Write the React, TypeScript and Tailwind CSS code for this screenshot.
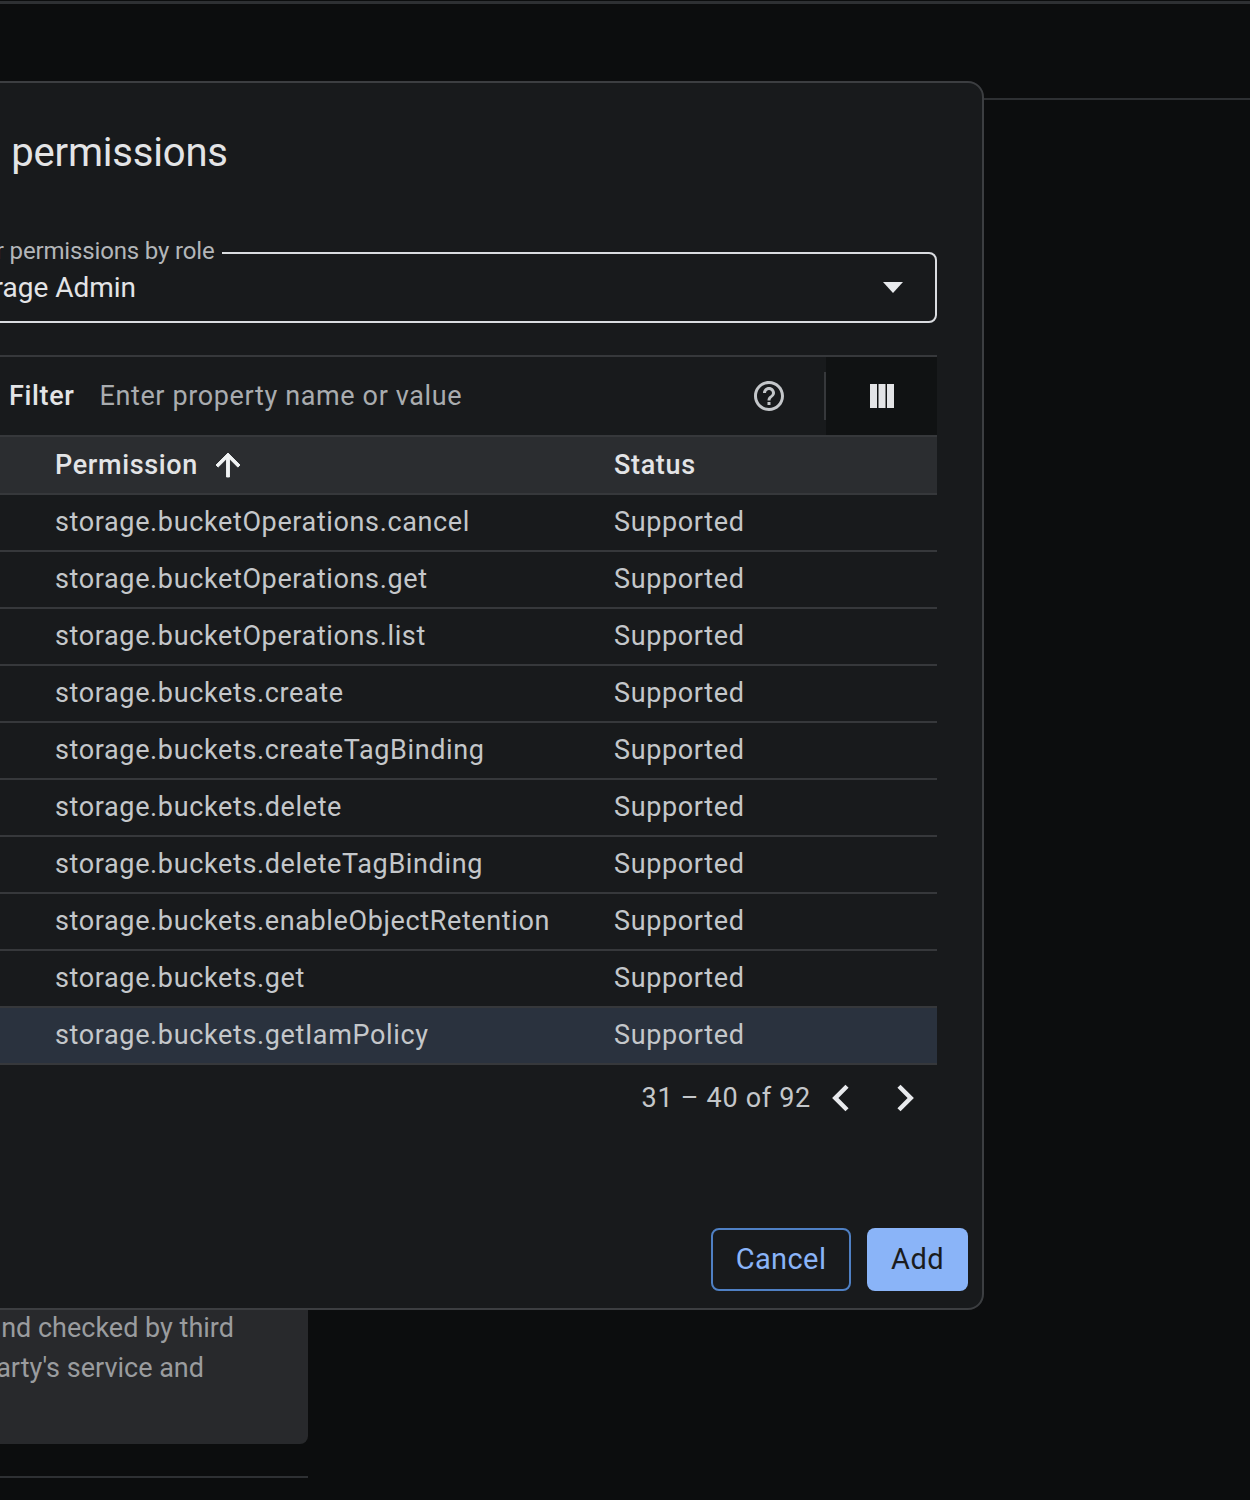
const permissions = [
  "storage.bucketOperations.cancel",
  "storage.bucketOperations.get",
  "storage.bucketOperations.list",
  "storage.buckets.create",
  "storage.buckets.createTagBinding",
  "storage.buckets.delete",
  "storage.buckets.deleteTagBinding",
  "storage.buckets.enableObjectRetention",
  "storage.buckets.get",
  "storage.buckets.getIamPolicy",
]

function Row({ name, selected }: { name: string; selected: boolean }) {
  return (
    <div
      className={`flex h-[57px] items-center border-b-2 border-[#36383b] pt-[1px] text-[27px] tracking-[0.63px] text-[#c4c7ca] ${
        selected ? "bg-[#2a323e]" : ""
      }`}
    >
      <div className="w-[674px] pl-[115px]">{name}</div>
      <div>Supported</div>
    </div>
  )
}

export default function App() {
  return (
    <div className="relative h-[1500px] w-[1250px] overflow-hidden bg-[#0c0d0e] font-['Roboto',sans-serif]">
      {/* page behind the dialog */}
      <div className="mt-[1px] h-[3px] bg-[#2e3033]" />
      <div className="mt-[94px] h-[2px] bg-[#2e3033]" />
      <div className="ml-[-100px] mt-[1200px] w-[408px]">
        <div className="rounded-b-lg bg-[#28292c] pb-[56px] pl-[100px] pt-[8px] text-[27px] leading-[40px] text-[#9a9c9f]">
          <div className="ml-[-60px] h-[80px] w-[340px] whitespace-nowrap">
            <div className="text-right pr-[46px]">and checked by third</div>
            <div className="text-right pr-[76px]">party's service and</div>
          </div>
        </div>
        <div className="mt-[32px] h-[2px] bg-[#2e3033]" />
      </div>

      {/* dialog */}
      <div className="absolute left-[-106px] top-[81px] h-[1229px] w-[1090px] rounded-r-[16px] border-2 border-[#3c3e41] bg-[#181a1c] pl-[44px] pr-[45px]">
        <h1 className="ml-[-9px] mt-[40px] text-[40px] leading-[60px] tracking-[-0.2px] text-[#e3e4e6]">Add permissions</h1>

        <div className="relative mt-[69px] flex h-[71px] items-center justify-between rounded-lg border-2 border-[#dadce0] pl-[10px] pr-[32px] text-[28px] text-[#e3e4e6]">
          <span className="absolute left-[7px] top-[-18px] bg-[#181a1c] px-[2px] pr-[7px] text-[24px] leading-[30px] tracking-[-0.15px] text-[#b3b6b9]">
            Filter permissions by role
          </span>
          <span>Storage Admin</span>
          <svg width="20" height="12" viewBox="0 0 20 12">
            <path d="M0 0h20L10 11z" fill="#e8eaed" />
          </svg>
        </div>

        <div className="mt-[32px] flex h-[82px] border-y-2 border-[#36383b]">
          <div className="flex flex-1 items-center pl-[69px] text-[27px] tracking-[0.63px]">
            <span className="font-medium text-[#e3e4e6]">Filter</span>
            <span className="ml-[25px] text-[#a9acaf]">Enter property name or value</span>
            <svg width="36" height="36" viewBox="0 0 24 24" fill="#c4c7ca" className="ml-auto mr-[37px]">
              <path d="M11 18h2v-2h-2v2zm1-16C6.48 2 2 6.48 2 12s4.48 10 10 10 10-4.48 10-10S17.52 2 12 2zm0 18c-4.41 0-8-3.59-8-8s3.59-8 8-8 8 3.59 8 8-3.59 8-8 8zm0-14c-2.21 0-4 1.79-4 4h2c0-1.1.9-2 2-2s2 .9 2 2c0 2-3 1.75-3 5h2c0-2.25 3-2.5 3-5 0-2.21-1.79-4-4-4z" />
            </svg>
            <div className="h-[48px] w-[2px] bg-[#36383b]" />
          </div>
          <div className="flex w-[111px] items-center justify-center bg-[#101213]">
            <svg width="24" height="24" viewBox="0 0 24 24" fill="#e3e4e6">
              <path d="M0 0h7v24H0zM8.500 0h7v24h-7zM17 0h7v24h-7z" />
            </svg>
          </div>
        </div>

        <div className="flex h-[57.5px] items-center border-b-2 border-[#36383b] bg-[#2b2d30] pt-[1px] text-[27px] font-medium tracking-[0.65px] text-[#e3e4e6]">
          <div className="flex w-[674px] items-center pl-[115px]">
            Permission
            <svg width="36" height="36" viewBox="0 0 24 24" fill="#f1f3f4" stroke="#f1f3f4" strokeWidth="0.6" className="ml-[12px]">
              <path d="M4 12l1.410 1.410L11 7.830V20h2V7.830l5.580 5.590L20 12l-8-8-8 8z" />
            </svg>
          </div>
          <div>Status</div>
        </div>

        {permissions.map((name, i) => (
          <Row key={name} name={name} selected={i === permissions.length - 1} />
        ))}

        <div className="mt-[13.5px] flex items-center justify-end text-[27px] tracking-[0.7px] text-[#c4c7ca]">
          <span>31 – 40 of 92</span>
          <svg width="40" height="40" viewBox="3 3 18 18" fill="#e8eaed" className="ml-[10px]">
            <path d="M15.410 7.410L14 6l-6 6 6 6 1.410-1.410L10.830 12z" />
          </svg>
          <svg width="40" height="40" viewBox="3 3 18 18" fill="#e8eaed" className="ml-[24px] mr-[12px]">
            <path d="M8.590 16.590L10 18l6-6-6-6-1.410 1.410L13.170 12z" />
          </svg>
        </div>

        <div className="absolute bottom-[17px] right-[14px] flex gap-[16px] text-[29px] tracking-[0.4px]">
          <button className="h-[63px] w-[140px] rounded-lg border-2 border-[#4f80c4] text-[#8ab4f8]">Cancel</button>
          <button className="h-[63px] w-[101px] rounded-lg bg-[#8ab4f8] text-[#1b1c1e]">Add</button>
        </div>
      </div>
    </div>
  )
}
